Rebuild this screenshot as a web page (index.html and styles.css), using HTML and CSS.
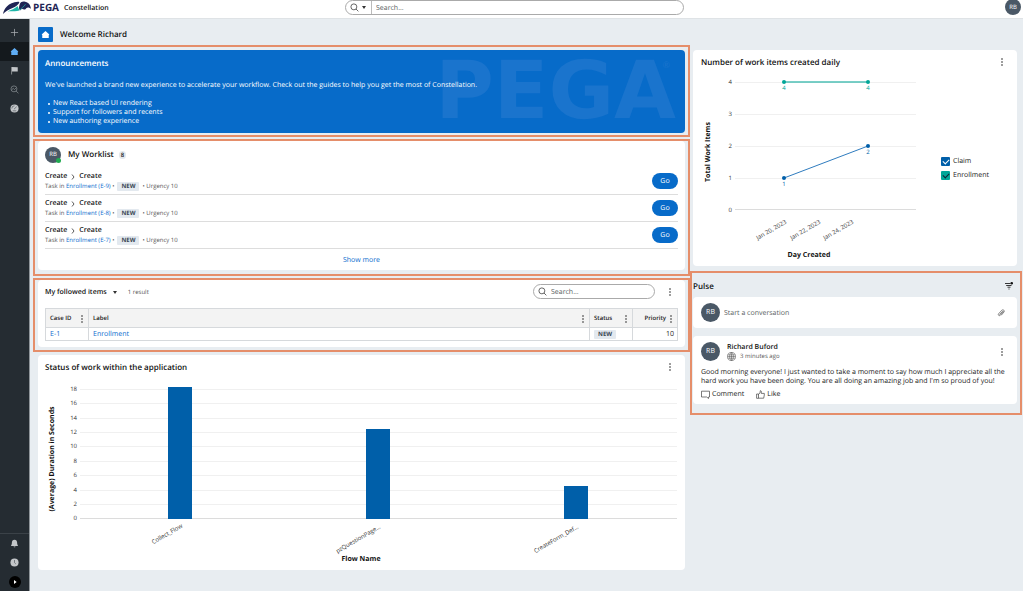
FILE: index.html
```html
<!DOCTYPE html>
<html lang="en">
<head>
<meta charset="utf-8">
<title>Pega Constellation</title>
<link rel="stylesheet" href="styles.css">
</head>
<body>
<svg class="sprite" aria-hidden="true">
  <symbol id="kebab" viewBox="0 0 4 8"><circle cx="2" cy="1" r=".8"/><circle cx="2" cy="4" r=".8"/><circle cx="2" cy="7" r=".8"/></symbol>
  <symbol id="search" viewBox="0 0 10 10"><circle cx="4.3" cy="4.3" r="3.3" fill="none" stroke="currentColor" stroke-width=".9"/><path d="M6.7 6.7 9.3 9.3" stroke="currentColor" stroke-width=".9"/></symbol>
  <symbol id="home" viewBox="0 0 10 10"><path d="M5 1 9.300 5 8.600 5.600V9H1.400V5.600L.7 5Z"/></symbol>
</svg>
<header class="top">
  <a class="brand" href="#">
    <svg class="logo" viewBox="0 0 28 13" aria-hidden="true">
      <path d="M0 13C1 8 5 1.500 15 .8 16.500 .8 16.500 1.500 16 2.200 14 4.500 13 5.500 9.500 7 5.500 8.500 3 10 0 13Z" fill="#1f2555"/>
      <path d="M4.500 10.500C8 8.600 12 8 14.500 5L16.500 9.500C12 11 9 9.500 4.500 10.500Z" fill="#1fb6a8"/>
      <path d="M16.500 4C17 1.500 19 .3 22 .7 25 1 27.500 3.500 28 8 26.500 6.500 24.500 6 23 7.500 22.500 9 20 8.500 19 7.800L17 9.500C15.500 7.500 16 6 16.500 4Z" fill="#1f2555"/>
      <path d="M17 9C18.500 6.500 21 6 22.500 3.200" stroke="#1fb6a8" stroke-width=".7" fill="none"/>
    </svg>
    <span class="pega">PEGA</span><span class="app">Constellation</span>
  </a>
  <form class="search search-top">
    <button class="scope" type="button" aria-label="Search scope"><svg class="i9"><use href="#search"/></svg><span class="caret"></span></button>
    <input type="text" placeholder="Search..." aria-label="Search">
  </form>
  <button class="avatar a16 me" type="button">RB</button>
</header>
<div class="shell">
  <nav class="side" aria-label="Main">
    <a href="#" aria-label="Create"><svg viewBox="0 0 10 10"><path d="M5 1V9M1 5H9" stroke="#aeb2b6" stroke-width=".8"/></svg></a>
    <a href="#" aria-label="Home" class="on"><svg><use href="#home"/></svg></a>
    <a href="#" aria-label="Flag"><svg viewBox="0 0 10 10"><path d="M1.6 1V9.5H2.3V6H8.6V1.4Z" fill="#c3c6c9"/></svg></a>
    <a href="#" aria-label="Explore"><svg viewBox="0 0 10 10" fill="none" stroke="#8c9297" stroke-width=".8"><circle cx="4.4" cy="4.3" r="3.3"/><path d="M6.8 6.7 9.4 9.3M2 5.2 3.6 3.8 5 5 6.6 3.4"/></svg></a>
    <a href="#" aria-label="Dashboard"><svg viewBox="0 0 10 10"><circle cx="5" cy="5" r="4.5" fill="#c3c6c9"/><path d="M2 5A3 3 0 0 1 5 2M4.4 5.8 7.4 3M3 7.6H7" stroke="#555c62" stroke-width=".8" fill="none"/></svg></a>
    <div class="side-end">
      <a href="#" aria-label="Notifications"><svg viewBox="0 0 10 10" fill="#c3c6c9"><path d="M5 .8C7 .8 7.8 2.3 7.9 4 8 6 8.3 6.8 9 7.8H1C1.700 6.800 2 6 2.100 4 2.200 2.300 3 .8 5 .8ZM4 8.200H6C6 9.500 4 9.500 4 8.200Z"/></svg></a>
      <a href="#" aria-label="Recents"><svg viewBox="0 0 10 10"><circle cx="5" cy="5" r="4.500" fill="#c3c6c9"/><path d="M5 2.200V5.200L6.500 6.600" stroke="#555c62" stroke-width=".8" fill="none"/></svg></a>
      <a href="#" aria-label="Expand" class="expand"><svg viewBox="0 0 12 12"><circle cx="6" cy="6" r="6"/><path d="M5 4 7.600 6 5 8Z" fill="#fff"/></svg></a>
    </div>
  </nav>
  <main>
    <div class="page-title"><span class="home"><svg><use href="#home"/></svg></span><h1>Welcome Richard</h1></div>
    <div class="cols">
      <div class="col">
        <section class="mark">
          <div class="card announce">
            <span class="water" aria-hidden="true">PEGA<sup>®</sup></span>
            <h2>Announcements</h2>
            <p>We've launched a brand new experience to accelerate your workflow. Check out the guides to help you get the most of Constellation.</p>
            <ul><li>New React based UI rendering</li><li>Support for followers and recents</li><li>New authoring experience</li></ul>
          </div>
        </section>
        <section class="mark work-mark">
          <div class="card work">
            <div class="work-head"><span class="avatar a16">RB<i class="dot"></i></span><h2>My Worklist</h2><span class="count">8</span></div>
            <ul class="tasks">
              <li><div><div class="crumb">Create <svg viewBox="0 0 4 6"><path d="M1 .5 3 3 1 5.500"/></svg> Create</div><div class="meta"><span>Task in <a href="#">Enrollment (E-9)</a> •</span><span class="tag">NEW</span><span>• Urgency 10</span></div></div><button class="go" type="button">Go</button></li>
              <li><div><div class="crumb">Create <svg viewBox="0 0 4 6"><path d="M1 .5 3 3 1 5.500"/></svg> Create</div><div class="meta"><span>Task in <a href="#">Enrollment (E-8)</a> •</span><span class="tag">NEW</span><span>• Urgency 10</span></div></div><button class="go" type="button">Go</button></li>
              <li><div><div class="crumb">Create <svg viewBox="0 0 4 6"><path d="M1 .5 3 3 1 5.500"/></svg> Create</div><div class="meta"><span>Task in <a href="#">Enrollment (E-7)</a> •</span><span class="tag">NEW</span><span>• Urgency 10</span></div></div><button class="go" type="button">Go</button></li>
            </ul>
            <button class="more" type="button">Show more</button>
          </div>
        </section>
        <section class="mark follow-mark">
          <div class="card follow">
            <div class="follow-head">
              <button class="pick" type="button">My followed items <span class="caret"></span></button><span class="res">1 result</span>
              <label class="search search-in"><svg class="i9"><use href="#search"/></svg><input type="text" placeholder="Search..." aria-label="Search followed items"></label>
              <button class="kebab" type="button" aria-label="More"><svg><use href="#kebab"/></svg></button>
            </div>
            <table>
              <thead><tr>
                <th class="c-id"><div>Case ID<button class="kebab" type="button" aria-label="Case ID menu"><svg><use href="#kebab"/></svg></button></div></th>
                <th><div>Label<button class="kebab" type="button" aria-label="Label menu"><svg><use href="#kebab"/></svg></button></div></th>
                <th class="c-st"><div>Status<button class="kebab" type="button" aria-label="Status menu"><svg><use href="#kebab"/></svg></button></div></th>
                <th class="c-pr"><div>Priority<button class="kebab" type="button" aria-label="Priority menu"><svg><use href="#kebab"/></svg></button></div></th>
              </tr></thead>
              <tbody><tr><td><a href="#">E-1</a></td><td><a href="#">Enrollment</a></td><td><span class="tag">NEW</span></td><td class="num">10</td></tr></tbody>
            </table>
          </div>
        </section>
        <section class="card status">
          <div class="card-head"><h2>Status of work within the application</h2><button class="kebab" type="button" aria-label="More"><svg><use href="#kebab"/></svg></button></div>
          <svg class="chart" viewBox="0 0 647 192" role="img" aria-label="Average duration by flow">
            <path class="grid" d="M42 11.500H639M42 25.500H639M42 40.500H639M42 54.500H639M42 68.500H639M42 83.500H639M42 97.500H639M42 112.500H639M42 126.500H639"/>
            <path class="base" d="M42 140.500H639"/>
            <g class="tick end"><text x="39" y="13">18</text><text x="39" y="27">16</text><text x="39" y="42">14</text><text x="39" y="56">12</text><text x="39" y="70">10</text><text x="39" y="85">8</text><text x="39" y="99">6</text><text x="39" y="114">4</text><text x="39" y="128">2</text><text x="39" y="142">0</text></g>
            <g fill="#005fa9"><rect x="130" y="9" width="24" height="132"/><rect x="328" y="51" width="24" height="90"/><rect x="526" y="108" width="24" height="33"/></g>
            <g class="tick end"><text transform="translate(145 149) rotate(-30)">Collect_Flow</text><text transform="translate(343 150) rotate(-30)">pzQuestionPage...</text><text transform="translate(541 150) rotate(-30)">CreateForm_Def...</text></g>
            <text class="axis" x="323" y="183">Flow Name</text>
            <text class="axis" transform="translate(16 81) rotate(-90)">(Average) Duration in Seconds</text>
          </svg>
        </section>
      </div>
      <div class="col">
        <section class="card daily">
          <div class="card-head"><h2>Number of work items created daily</h2><button class="kebab" type="button" aria-label="More"><svg><use href="#kebab"/></svg></button></div>
          <div class="daily-body">
            <svg class="chart" viewBox="0 0 248 194" role="img" aria-label="Work items by day">
              <path class="grid" d="M42 10.500H223M42 42.500H223M42 74.500H223M42 106.500H223"/>
              <path class="base" d="M42 137.500H223"/>
              <g class="tick end"><text x="39" y="12">4</text><text x="39" y="44">3</text><text x="39" y="76">2</text><text x="39" y="108">1</text><text x="39" y="140">0</text></g>
              <path d="M91 10H175" stroke="#4dbfb5" stroke-width="1.500"/><path d="M91 106 175 74" stroke="#2f7cbf" stroke-width="1"/>
              <g fill="#00a698"><circle cx="91" cy="10" r="2"/><circle cx="175" cy="10" r="2"/></g>
              <g fill="#005fa9"><circle cx="91" cy="106" r="2"/><circle cx="175" cy="74" r="2"/></g>
              <g class="val teal"><text x="91" y="18">4</text><text x="175" y="18">4</text></g>
              <g class="val blue"><text x="91" y="114">1</text><text x="175" y="82">2</text></g>
              <g class="tick end"><text transform="translate(94 151) rotate(-30)">Jan 20, 2023</text><text transform="translate(128 151) rotate(-30)">Jan 22, 2023</text><text transform="translate(161 151) rotate(-30)">Jan 24, 2023</text></g>
              <text class="axis" x="116" y="185">Day Created</text>
              <text class="axis" transform="translate(17 80) rotate(-90)">Total Work Items</text>
            </svg>
            <div class="legend">
              <label><input type="checkbox" checked>Claim</label>
              <label><input type="checkbox" class="c2" checked>Enrollment</label>
            </div>
          </div>
        </section>
        <section class="mark pulse">
          <div class="pulse-head"><h2>Pulse</h2><button class="bare" type="button" aria-label="Filter"><svg class="i8" viewBox="0 0 8 8"><path d="M0 1.500H5M1.200 3.500H6.500M2.500 5.200H5.500M3.500 7H4.500" stroke="#222" stroke-width=".9"/><circle cx="6.700" cy="1.300" r="1.300" fill="#111"/></svg></button></div>
          <div class="card compose"><span class="avatar a19">RB</span><input type="text" placeholder="Start a conversation" aria-label="Start a conversation"><button class="bare" type="button" aria-label="Attach"><svg class="i8" viewBox="0 0 8 8" fill="none" stroke="#555" stroke-width=".7"><path d="M2.500 5.700 5.600 2.300C6 1.900 6.600 2.400 6.200 2.900L3.200 6.300C2.300 7.300.6 6 1.500 4.900L4.700 1.300C6 0 8.100 1.600 7 3L4.200 6.300"/></svg></button></div>
          <article class="card post">
            <div class="post-head"><span class="avatar a19">RB</span>
              <div class="who"><strong>Richard Buford</strong><span><svg class="i9" viewBox="0 0 8 8" fill="none" stroke="#555" stroke-width=".5"><circle cx="4" cy="4" r="3.600"/><ellipse cx="4" cy="4" rx="1.700" ry="3.600"/><path d="M4 .4V7.600M.8 2.500H7.200M.8 5.500H7.200M.4 4H7.600"/></svg>3 minutes ago</span></div>
              <button class="kebab" type="button" aria-label="More"><svg><use href="#kebab"/></svg></button></div>
            <p>Good morning everyone! I just wanted to take a moment to say how much I appreciate all the hard work you have been doing. You are all doing an amazing job and I'm so proud of you!</p>
            <div class="acts"><button class="bare" type="button"><svg class="i9" viewBox="0 0 9 9"><path d="M.5 1.200H8.500V7H7.500V8.500L5.700 7H.5Z"/></svg>Comment</button><button class="bare" type="button"><svg class="i9" viewBox="0 0 9 9"><path d="M.6 4H2.500V8.300H.6ZM2.500 4.200 4 3 4.300.7C5.300.5 5.700 1.500 5.200 3.400H8.300V5L7.700 8.200H2.500"/></svg>Like</button></div>
          </article>
        </section>
      </div>
    </div>
  </main>
</div>
</body>
</html>
```
FILE: styles.css
```css
* { box-sizing: border-box; margin: 0; padding: 0; }
body { min-height: 100vh; display: flex; flex-direction: column; padding-right: 1px; background: #fff; color: #1a1a1a; font: 7px/9px "Open Sans", "Noto Sans", sans-serif; text-rendering: geometricPrecision; }
ul { list-style: none; }
a { color: #0a6cce; text-decoration: none; }
button, input { font: inherit; color: inherit; border: 0; background: none; text-rendering: inherit; }
input { outline: 0; min-width: 0; }
input::placeholder { color: #5a5f63; opacity: 1; }
svg { display: block; flex: none; }
h1, h2 { padding-top: 1px; font-size: 8px; line-height: 12px; font-weight: 600; color: #111; }
.sprite { width: 0; height: 0; position: absolute; }
.i8 { width: 8px; height: 8px; }
.i9 { width: 9px; height: 9px; }
.caret { display: inline-block; border: 2px solid transparent; border-top: 3px solid #333; border-bottom: 0; }
.bare { display: flex; align-items: center; gap: 2px; }
.kebab { display: flex; padding: 0 2px; }
.kebab svg { width: 4px; height: 8px; fill: #222; }
.avatar { position: relative; display: flex; flex: none; align-items: center; justify-content: center; border-radius: 50%; background: #4a5866; color: #fff; font-size: 6px; }
.a16 { width: 16px; height: 16px; }
.a19 { width: 19px; height: 19px; font-size: 7px; }

.top { display: grid; grid-template-columns: 342fr 339fr 337fr; height: 19px; padding: 0 2px 0 3px; border-bottom: 1px solid #dfe3e6; }
.brand { display: flex; height: 14px; align-items: center; color: #111; }
.logo { width: 28px; height: 13px; }
.pega { margin-left: 2px; font: 700 10px/14px "Open Sans", sans-serif; color: #1f2555; }
.app { margin-left: 5px; padding-top: 2px; font-weight: 600; }
.search { display: flex; align-items: center; height: 15px; border: 1px solid #aaa; border-radius: 8px; background: #fff; }
.search input { flex: 1; padding-top: 1px; }
.search svg { color: #444; }
.scope { display: flex; align-items: center; gap: 3px; height: 13px; padding: 0 5px 0 4px; border-right: 1px solid #bbb; }
.scope + input { padding-left: 4px; }
.me { justify-self: end; margin-top: -1px; }

.shell { flex: 1; display: flex; background: #e8edf1; }
.side { width: 30px; display: flex; flex: none; flex-direction: column; padding-top: 4px; background: #252c32; border-right: 1px solid #8f959a; }
.side a { display: flex; align-items: center; justify-content: center; height: 19px; }
.side svg { width: 9px; height: 9px; }
.side .on { background: #14191d; }
.side .on svg { fill: #5fadf5; }
.side .expand svg { width: 12px; height: 12px; }
.side-end { margin-top: auto; border-top: 1px solid #3b4248; }
main { flex: 1; min-width: 0; padding: 8px 1px 20px 3px; }
.page-title { display: flex; align-items: center; gap: 7px; height: 15px; padding-left: 5px; }
.home { display: flex; align-items: center; justify-content: center; width: 15px; height: 15px; border-radius: 1px; background: #076bc9; }
.home svg { width: 9px; height: 9px; fill: #fff; }
.cols { display: grid; grid-template-columns: minmax(0, 657fr) minmax(0, 332fr); margin-top: 3px; }
.col { display: flex; flex-direction: column; gap: 2px; }
.mark { border: 2px solid #e58e6a; padding: 3px 3px 2px; }
.card { background: #fff; border-radius: 4px; }
.card-head { display: flex; justify-content: space-between; align-items: center; padding: 0 11px 0 7px; }

.announce { position: relative; padding: 7px; background: #076bc9; color: #fff; }
.announce h2, .announce p, .announce ul { position: relative; }
.announce h2 { color: #fff; }
.announce p { margin-top: 11px; }
.announce ul { margin-top: 9px; }
.announce li { display: flex; align-items: center; gap: 3px; padding-left: 3px; }
.announce li::before { content: ""; width: 2px; height: 2px; border-radius: 50%; background: #fff; }
.water { position: absolute; right: 9px; top: 1px; font: 700 80px/80px "DejaVu Sans", sans-serif; color: #1a74cd; }
.water sup { font: 400 9px/9px Lato, sans-serif; position: absolute; right: 6px; top: 9px; }

.work-mark { padding: 0 3px 4px; }
.work { padding: 0 7px; }
.work-head { display: flex; align-items: center; height: 27px; }
.work-head h2 { margin: 0 5px 0 7px; }
.dot { position: absolute; right: 0; bottom: 0; width: 5px; height: 5px; border-radius: 50%; background: #20aa50; }
.count { padding: 0 2px; border-radius: 4px; background: #e3e8ed; font-size: 6px; line-height: 8px; font-weight: 600; }
.tasks li { display: flex; align-items: center; justify-content: space-between; height: 27px; border-bottom: 1px solid #ddd; }
.crumb { display: flex; align-items: center; gap: 4px; padding-top: 1px; font-weight: 600; color: #111; }
.crumb svg { width: 4px; height: 6px; fill: none; stroke: #333; stroke-width: .8; }
.meta { display: flex; align-items: center; gap: 3px; font-size: 6px; line-height: 10px; color: #555; }
.tag { display: inline-block; padding: 0 4px; border-radius: 1px; background: #e3e9ef; color: #3a4754; font-size: 6px; line-height: 9px; font-weight: 700; }
.go { width: 26px; height: 16px; border-radius: 8px; background: #076bc9; color: #fff; }
.more { display: block; margin: 0 auto; height: 21px; padding-top: 1px; color: #0a6cce; }

.follow-mark { padding: 0 3px 3px; }
.follow { padding: 0 7px 6px; }
.follow-head { display: flex; align-items: center; height: 28px; padding-bottom: 5px; }
.pick { display: flex; align-items: center; gap: 6px; padding-top: 1px; font-weight: 600; color: #111; }
.res { margin-left: 11px; padding-top: 1px; font-size: 6px; color: #555; }
.search-in { width: 122px; margin-left: auto; margin-right: 11px; padding: 0 4px; gap: 4px; }
.follow-head .kebab { margin-right: 4px; }
table { width: 100%; border-collapse: collapse; table-layout: fixed; }
th, td { border: 1px solid #d6d9dc; text-align: left; padding: 0 3px 0 4px; }
th { height: 19px; background: #f3f3f3; font-size: 6px; font-weight: 600; }
th div { display: flex; justify-content: space-between; align-items: center; padding-top: 1px; }
td { height: 13px; line-height: 9px; }
td a { display: block; padding-top: 1px; }
td .tag { vertical-align: top; }
.c-id, .c-st { width: 43px; }
.c-pr { width: 45px; }
.c-pr div { justify-content: flex-end; gap: 2px; }
.num { text-align: right; }
th .kebab { padding: 0 1px; }

.status { margin: 1px 5px 0; padding-top: 6px; }
.chart { width: 100%; height: auto; }
.status .card-head { height: 17px; padding-bottom: 5px; }
.grid { stroke: #f0f0f0; }
.base { stroke: #dcdcdc; }
.tick { font-size: 6px; fill: #333; }
.end { text-anchor: end; }
.axis { font-size: 7px; font-weight: 700; text-anchor: middle; fill: #111; }
.val { font-size: 6px; text-anchor: middle; }
.teal { fill: #00a698; }
.blue { fill: #005fa9; }

.daily { margin: 5px 5px 3px 3px; padding-top: 6px; }
.daily .card-head { height: 16px; padding: 0 11px 4px 8px; }
.daily-body { display: flex; align-items: center; }
.daily-body .chart { flex: 248 1 0; min-width: 0; }
.legend { flex: 76 1 0; display: flex; flex-direction: column; gap: 5px; padding-bottom: 2px; }
.legend label { display: flex; align-items: center; gap: 3px; }
.legend input { appearance: none; position: relative; width: 9px; height: 9px; border-radius: 1px; background: #005fa9; color: #fff; }
.legend .c2 { background: #00a698; color: #123; }
.legend input::after { content: ""; position: absolute; left: 2px; top: 2px; width: 5px; height: 3px; border-left: 1px solid; border-bottom: 1px solid; transform: rotate(-45deg); }

.pulse { padding: 0 3px 9px 1px; }
.pulse-head { display: flex; align-items: center; justify-content: space-between; height: 24px; padding: 2px 4px 0 0; }
.compose { display: flex; align-items: center; gap: 4px; height: 31px; padding: 0 12px 0 8px; }
.compose input { flex: 1; padding-top: 1px; }
.post { margin-top: 8px; padding: 6px 7px 5px 8px; }
.post-head { display: flex; align-items: center; gap: 7px; }
.post-head .kebab { margin-left: auto; margin-right: 4px; }
.who strong { display: block; padding-top: 1px; font-weight: 600; color: #111; }
.who span { display: flex; align-items: center; gap: 4px; color: #555; font-size: 6px; }
.post p { margin-top: 7px; }
.acts { display: flex; gap: 12px; margin-top: 4px; }
.acts svg { fill: none; stroke: #444; stroke-width: .7; }
```
